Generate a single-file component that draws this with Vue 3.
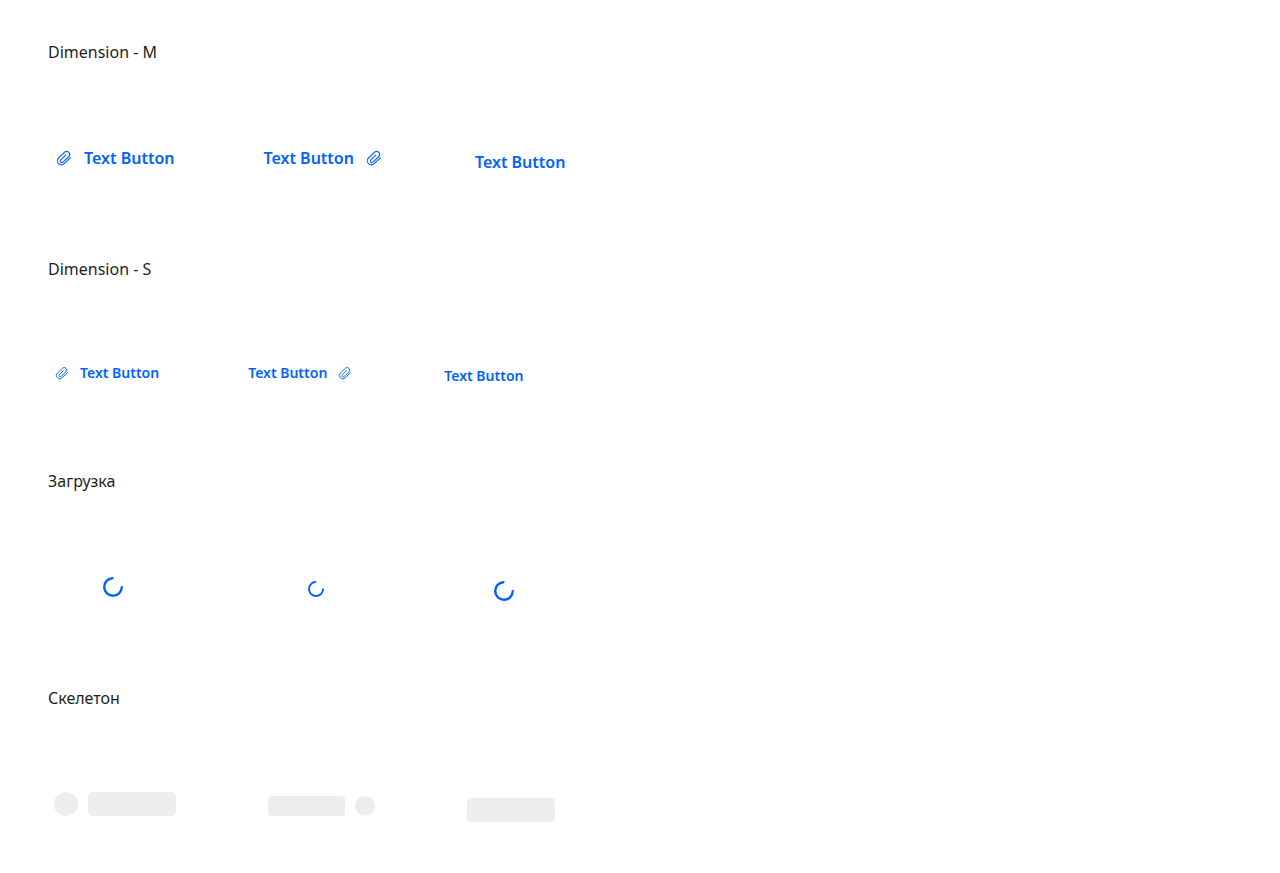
<script setup>
const label = 'Text Button'
const clip = 'M18.4 11.8l-6.2 5.9a4 4 0 0 1-5.7-5.7l6.1-5.8a3.05 3.05 0 0 1 4.3 4.3l-5.9 5.6a1.55 1.55 0 0 1-2.2-2.2l4.9-4.7'
const sections = [
  { title: 'Dimension - M', buttons: [{ size: 'm', icon: 'start' }, { size: 'm', icon: 'end' }, { size: 'm', drop: 'drop-m' }] },
  { title: 'Dimension - S', buttons: [{ size: 's', icon: 'start' }, { size: 's', icon: 'end' }, { size: 's', drop: 'drop-s' }] },
  { title: 'Загрузка', state: 'loading', buttons: [{ size: 'm', icon: 'start' }, { size: 's', icon: 'end', drop: 'drop-m' }, { size: 'm', drop: 'drop-m' }] },
  { title: 'Скелетон', state: 'skeleton', buttons: [{ size: 'm', icon: 'start' }, { size: 's', icon: 'end', drop: 'drop-m' }, { size: 'm', drop: 'drop-l' }] },
]
</script>

<template>
  <main class="page">
    <section v-for="s in sections" :key="s.title">
      <h2>{{ s.title }}</h2>
      <div class="row" :class="s.state">
        <button
          v-for="(b, i) in s.buttons"
          :key="i"
          type="button"
          class="btn"
          :class="[b.size, b.drop, b.icon, { plain: !b.icon }]"
          :aria-label="label"
        >
          <svg v-if="s.state === 'loading'" class="spinner" viewBox="0 0 20 20" aria-hidden="true">
            <path d="M9.3 1.2A8.8 8.8 0 1 0 18.8 10.3" />
          </svg>
          <template v-else-if="s.state === 'skeleton'">
            <span v-if="b.icon" class="dot"></span>
            <span class="bar"></span>
          </template>
          <template v-else>
            <svg v-if="b.icon" class="icon" viewBox="0 0 24 24" aria-hidden="true">
              <path :d="clip" />
            </svg>
            <span>{{ label }}</span>
          </template>
        </button>
      </div>
    </section>
  </main>
</template>

<style>
body {
  margin: 0;
  background: #fff;
}
</style>

<style scoped>
.page {
  padding: 40px 48px 0;
  font-family: "Noto Sans", sans-serif;
  color: #1e1e24;
}
h2 {
  margin: 0 0 82px;
  font-size: 16px;
  line-height: 24px;
  font-weight: 400;
}
.row {
  display: flex;
  align-items: flex-start;
  gap: 89px;
  padding: 0 4px 83px;
}
.btn {
  display: flex;
  align-items: center;
  justify-content: center;
  gap: 8px;
  padding: 0;
  border: 0;
  background: none;
  color: #0062ff;
  font-family: inherit;
  font-weight: 600;
  white-space: nowrap;
  cursor: pointer;
}
.btn.end {
  flex-direction: row-reverse;
}
.m {
  height: 24px;
  font-size: 16px;
  line-height: 24px;
}
.s {
  height: 20px;
  font-size: 14px;
  line-height: 20px;
}
.drop-m {
  margin-top: 4px;
}
.drop-s {
  margin-top: 3px;
}
.drop-l {
  margin-top: 6px;
}
.icon {
  width: 24px;
  height: 24px;
}
.s .icon {
  width: 20px;
  height: 20px;
}
.icon path,
.spinner path {
  fill: none;
  stroke: currentColor;
  stroke-linecap: round;
  stroke-linejoin: round;
}
.icon path {
  stroke-width: 1.1;
}
.spinner {
  width: 20px;
  height: 20px;
}
.spinner path {
  stroke-width: 2.4;
}
.s .spinner {
  width: 16px;
  height: 16px;
}
.loading {
  gap: 91px;
}
.loading .m {
  width: 121px;
}
.loading .s {
  width: 104px;
}
.loading .plain {
  width: 90px;
}
.skeleton {
  gap: 92px;
  padding-left: 6px;
}
.skeleton .btn {
  gap: 10px;
}
.bar,
.dot {
  background: #ededed;
}
.bar {
  width: 88px;
  height: 24px;
  border-radius: 4px;
}
.dot {
  width: 24px;
  height: 24px;
  border-radius: 50%;
}
.s .bar {
  width: 77px;
  height: 20px;
}
.s .dot {
  width: 20px;
  height: 20px;
}
</style>
